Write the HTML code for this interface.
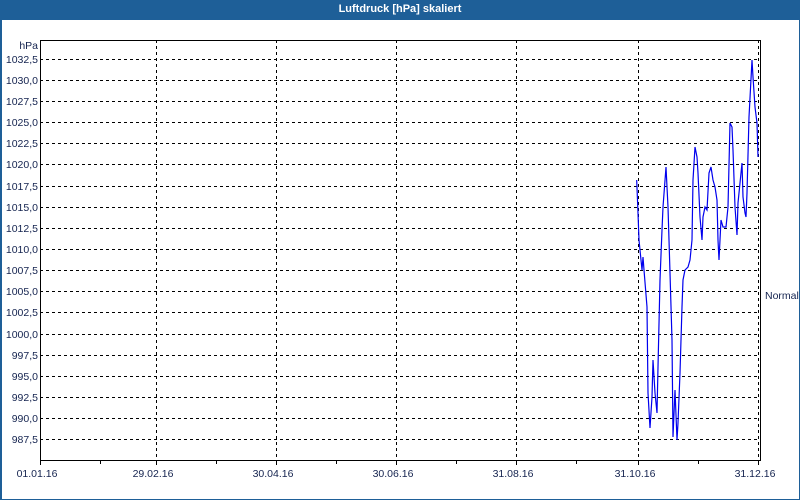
<!DOCTYPE html>
<html><head><meta charset="utf-8"><style>
html,body{margin:0;padding:0;background:#fff;}
body{width:800px;height:500px;overflow:hidden;position:relative;font-family:"Liberation Sans",Tahoma,sans-serif;}
.frame{position:absolute;left:0;top:0;width:798px;height:498px;border:1px solid #1e5f98;border-left-width:2px;width:797px;}
.title{position:absolute;left:0;top:0;width:800px;height:20px;background:#1e5f98;color:#fff;font-weight:bold;font-size:11px;text-align:center;line-height:19px;}
svg{position:absolute;left:0;top:0;}
text{font-family:"Liberation Sans",Tahoma,sans-serif;font-size:10.5px;fill:#14234f;}
</style></head><body>
<div class="frame"></div>
<div class="title">Luftdruck [hPa] skaliert</div>
<svg width="800" height="500" viewBox="0 0 800 500">
<g stroke="#000" stroke-width="1" stroke-dasharray="3,3" shape-rendering="crispEdges">
<line x1="40" y1="59.5" x2="760" y2="59.5"/>
<line x1="40" y1="80.5" x2="760" y2="80.5"/>
<line x1="40" y1="101.5" x2="760" y2="101.5"/>
<line x1="40" y1="122.5" x2="760" y2="122.5"/>
<line x1="40" y1="143.5" x2="760" y2="143.5"/>
<line x1="40" y1="164.5" x2="760" y2="164.5"/>
<line x1="40" y1="186.5" x2="760" y2="186.5"/>
<line x1="40" y1="207.5" x2="760" y2="207.5"/>
<line x1="40" y1="228.5" x2="760" y2="228.5"/>
<line x1="40" y1="249.5" x2="760" y2="249.5"/>
<line x1="40" y1="270.5" x2="760" y2="270.5"/>
<line x1="40" y1="291.5" x2="760" y2="291.5"/>
<line x1="40" y1="312.5" x2="760" y2="312.5"/>
<line x1="40" y1="334.5" x2="760" y2="334.5"/>
<line x1="40" y1="355.5" x2="760" y2="355.5"/>
<line x1="40" y1="376.5" x2="760" y2="376.5"/>
<line x1="40" y1="397.5" x2="760" y2="397.5"/>
<line x1="40" y1="418.5" x2="760" y2="418.5"/>
<line x1="40" y1="439.5" x2="760" y2="439.5"/>
<line x1="156.5" y1="40" x2="156.5" y2="460"/>
<line x1="276.5" y1="40" x2="276.5" y2="460"/>
<line x1="396.5" y1="40" x2="396.5" y2="460"/>
<line x1="516.5" y1="40" x2="516.5" y2="460"/>
<line x1="638.5" y1="40" x2="638.5" y2="460"/>
<line x1="758.5" y1="40" x2="758.5" y2="460"/>
</g>
<g stroke="#000" stroke-width="1" shape-rendering="crispEdges" fill="none">
<rect x="40.5" y="40.5" width="720" height="420"/>
<line x1="40.5" y1="460" x2="40.5" y2="465"/>
<line x1="100.5" y1="460" x2="100.5" y2="464"/>
<line x1="156.5" y1="460" x2="156.5" y2="465"/>
<line x1="216.5" y1="460" x2="216.5" y2="464"/>
<line x1="276.5" y1="460" x2="276.5" y2="465"/>
<line x1="336.5" y1="460" x2="336.5" y2="464"/>
<line x1="396.5" y1="460" x2="396.5" y2="465"/>
<line x1="456.5" y1="460" x2="456.5" y2="464"/>
<line x1="516.5" y1="460" x2="516.5" y2="465"/>
<line x1="576.5" y1="460" x2="576.5" y2="464"/>
<line x1="638.5" y1="460" x2="638.5" y2="465"/>
<line x1="698.5" y1="460" x2="698.5" y2="464"/>
<line x1="758.5" y1="460" x2="758.5" y2="465"/>
</g>
<polyline fill="none" stroke="#0000ee" stroke-width="1.2" points="636.7,180 638,213 639,240 641,260 642,270 643,257 644,270 647,307 648,393 650,428 652,397 653,360 655,393 657,413 658,367 660,280 662,230 663,207 666,167 668,207 670,273 672,340 673,437 675,390 677,440 678,423 680,373 682,307 683,280 685,270 688,267 690,260 692,240 693,180 695,147 697,157 698,173 700,217 702,240 703,217 705,207 707,210 709,173 711,167 713,180 715,187 717,200 718,240 719,260 721,220 723,227 726,227 728,207 730,123 732,127 733,150 735,207 737,235 738,203 740,183 742,163 743,197 745,213 746,217 747,193 749,117 752,60 753,77 755,107 757,123 758,157"/>
<g text-anchor="end">
<text x="38" y="49">hPa</text>
<text x="38" y="63">1032,5</text>
<text x="38" y="84">1030,0</text>
<text x="38" y="105">1027,5</text>
<text x="38" y="126">1025,0</text>
<text x="38" y="147">1022,5</text>
<text x="38" y="168">1020,0</text>
<text x="38" y="190">1017,5</text>
<text x="38" y="211">1015,0</text>
<text x="38" y="232">1012,5</text>
<text x="38" y="253">1010,0</text>
<text x="38" y="274">1007,5</text>
<text x="38" y="295">1005,0</text>
<text x="38" y="316">1002,5</text>
<text x="38" y="338">1000,0</text>
<text x="38" y="359">997,5</text>
<text x="38" y="380">995,0</text>
<text x="38" y="401">992,5</text>
<text x="38" y="422">990,0</text>
<text x="38" y="443">987,5</text>
</g>
<g text-anchor="middle">
<text x="37" y="477">01.01.16</text>
<text x="153" y="477">29.02.16</text>
<text x="273" y="477">30.04.16</text>
<text x="393" y="477">30.06.16</text>
<text x="513" y="477">31.08.16</text>
<text x="635" y="477">31.10.16</text>
<text x="755" y="477">31.12.16</text>
</g>
<text x="765" y="299">Normal</text>
</svg>
</body></html>
